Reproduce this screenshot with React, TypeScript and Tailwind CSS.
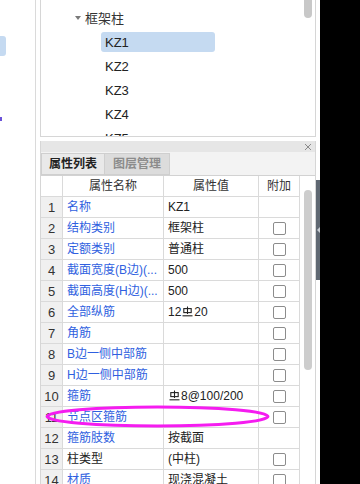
import React from "react";

interface Row {
  name: string;
  value: string;
  check: boolean;
  plain?: boolean;
}

const rows: Row[] = [
  { name: "名称", value: "KZ1", check: false },
  { name: "结构类别", value: "框架柱", check: true },
  { name: "定额类别", value: "普通柱", check: true },
  { name: "截面宽度(B边)(...", value: "500", check: true },
  { name: "截面高度(H边)(...", value: "500", check: true },
  { name: "全部纵筋", value: "12#20", check: true },
  { name: "角筋", value: "", check: true },
  { name: "B边一侧中部筋", value: "", check: true },
  { name: "H边一侧中部筋", value: "", check: true },
  { name: "箍筋", value: "#8@100/200", check: true },
  { name: "节点区箍筋", value: "", check: true },
  { name: "箍筋肢数", value: "按截面", check: false },
  { name: "柱类型", value: "(中柱)", check: true, plain: true },
  { name: "材质", value: "现浇混凝土", check: true },
];

// grade III rebar mark
function RebarMark() {
  return (
    <svg viewBox="0 0 11 11" className="mx-[1px] h-[11px] w-[11px] -translate-y-[1px]" aria-label="C">
      <g stroke="#222" strokeWidth="1.1" fill="none">
        <line x1="5.5" y1="0.5" x2="5.5" y2="8" />
        <rect x="1.8" y="2.6" width="7.4" height="4" />
        <line x1="0.5" y1="9.8" x2="10.5" y2="9.8" />
      </g>
    </svg>
  );
}

function Value({ text }: { text: string }) {
  const parts = text.split("#");
  return (
    <span className="flex items-center">
      {parts.map((p, i) => (
        <React.Fragment key={i}>
          {i > 0 && <RebarMark />}
          {p}
        </React.Fragment>
      ))}
    </span>
  );
}

function Checkbox() {
  return <div className="h-[13px] w-[13px] rounded-[2px] border border-[#8c8c8c] bg-white" />;
}

export default function App() {
  const treeItems = ["KZ1", "KZ2", "KZ3", "KZ4", "KZ5"];

  return (
    <div className="relative flex h-[484px] w-[360px] overflow-hidden bg-white font-['Liberation_Sans','Noto_Sans_CJK_SC',sans-serif] text-[12px] leading-none text-[#222]">
      {/* left strip */}
      <div className="flex w-[36px] flex-none flex-col border-r border-[#dadada]">
        <div className="mt-[36px] h-[20px] w-[6px] rounded-r-[3px] bg-[#c5daf1]" />
        <div className="mt-[61px] h-[4px] w-[2px] bg-[#6a52d8]" />
      </div>
      <div className="w-[4px] flex-none" />

      {/* main column */}
      <div className="flex w-[276px] flex-none flex-col">
        {/* tree panel */}
        <div className="flex h-[137px] flex-none border-x border-b border-[#d6d6d6]">
          <div className="flex-1 overflow-hidden pt-[6px]">
            <div className="flex h-[24px] items-center pl-[34px] text-[#333]">
              <svg viewBox="0 0 6 4" className="h-[4px] w-[6px]">
                <path d="M0 0 L6 0 L3 4 Z" fill="#7a7a7a" />
              </svg>
              <span className="ml-[4px] text-[13px]">框架柱</span>
            </div>
            {treeItems.map((k, i) => (
              <div key={k} className="flex h-[24px] items-center pl-[60px]">
                <div
                  className={`flex h-[20px] w-[114px] items-center rounded-[3px] pl-[4px] text-[13px] ${
                    i === 0 ? "bg-[#c5daf1]" : ""
                  }`}
                >
                  {k}
                </div>
              </div>
            ))}
          </div>
          <div className="w-[12px] flex-none">
            <div className="ml-[1px] h-[18px] w-[8px] rounded-b-full bg-[#c8c8c8]" />
          </div>
        </div>

        <div className="h-[4px] flex-none" />

        {/* properties panel */}
        <div className="flex flex-1 flex-col border-x border-[#d6d6d6]">
          <div className="flex h-[11px] flex-none items-center justify-end bg-[#e6e6e6] pr-[3px]">
            <svg viewBox="0 0 8 8" className="h-[8px] w-[8px]">
              <path d="M1 1 L7 7 M7 1 L1 7" stroke="#8a8a8a" strokeWidth="1" />
            </svg>
          </div>
          <div className="flex h-[24px] flex-none items-start border-b border-[#d2d2d2] bg-[#f3f3f3] pt-[1px]">
            <div className="flex h-[22px] w-[64px] items-center justify-center border border-[#cfcfcf] bg-[#e9e9e9] font-bold text-[#222]">
              属性列表
            </div>
            <div className="flex h-[22px] w-[65px] items-center justify-center border-y border-r border-[#cfcfcf] bg-[#dcdcdc] font-bold text-[#8c8c8c]">
              图层管理
            </div>
          </div>

          <div className="flex flex-1">
            <div className="w-[259px] flex-none">
              <div className="flex h-[21px] border-b border-[#dadada] text-[#333]">
                <div className="w-[22px] border-r border-[#dadada]" />
                <div className="flex w-[101px] items-center justify-center border-r border-[#dadada]">属性名称</div>
                <div className="flex w-[95px] items-center justify-center border-r border-[#dadada]">属性值</div>
                <div className="flex w-[41px] items-center justify-center border-r border-[#dadada]">附加</div>
              </div>
              {rows.map((r, i) => (
                <div key={i} className="flex h-[21px] border-b border-[#dadada]">
                  <div className="flex w-[22px] items-center justify-center border-r border-[#dadada] bg-[#f0f0f0] text-[13px] text-[#333]">
                    {i + 1}
                  </div>
                  <div
                    className={`flex w-[101px] items-center overflow-hidden whitespace-nowrap border-r border-[#dadada] pl-[4px] ${
                      r.plain ? "text-[#222]" : "text-[#2f5fe0]"
                    }`}
                  >
                    {r.name}
                  </div>
                  <div className="flex w-[95px] items-center whitespace-nowrap border-r border-[#dadada] pl-[4px]">
                    <Value text={r.value} />
                  </div>
                  <div className="flex w-[41px] items-center justify-center border-r border-[#dadada]">
                    {r.check && <Checkbox />}
                  </div>
                </div>
              ))}
            </div>
            <div className="w-[15px] flex-none pt-[14px]">
              <div className="ml-[4px] h-[180px] w-[8px] rounded-full bg-[#cdcdcd]" />
            </div>
          </div>
        </div>
      </div>

      {/* splitter */}
      <div className="w-[4px] flex-none pt-[180px]">
        <div className="flex h-[100px] items-center bg-[#5f6872]">
          <div className="ml-[1px] h-0 w-0 border-y-[3px] border-r-[3px] border-y-transparent border-r-[#c9ced4]" />
        </div>
      </div>
      <div className="flex-1 bg-black" />

      {/* annotation */}
      <svg className="pointer-events-none absolute left-[45px] top-[405px] h-[23px] w-[225px]" viewBox="0 0 225 23">
        <ellipse cx="112.5" cy="11.5" rx="110.5" ry="9.5" fill="none" stroke="#f51cf0" strokeWidth="3" />
      </svg>
    </div>
  );
}
